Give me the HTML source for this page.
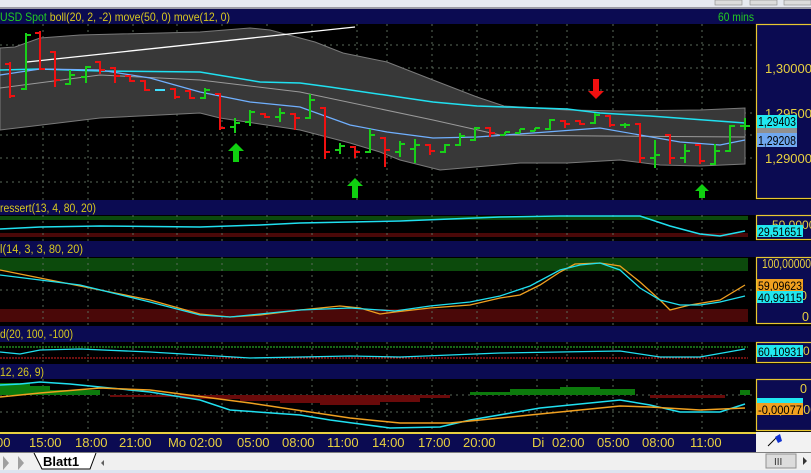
<!DOCTYPE html>
<html><head><meta charset="utf-8"><style>
html,body{margin:0;padding:0;width:811px;height:473px;overflow:hidden;background:#000;}
svg{display:block;font-family:"Liberation Sans",sans-serif;}
</style></head><body>
<svg width="811" height="473" viewBox="0 0 811 473" xmlns="http://www.w3.org/2000/svg">
<rect x="0" y="0" width="811" height="473" fill="#000"/>
<rect x="0" y="0" width="811" height="8" fill="#e6e9f0"/>
<rect x="0" y="7" width="811" height="2" fill="#9a9aa4"/>
<rect x="715" y="0" width="27" height="5" fill="#dcdcdc" stroke="#888" stroke-width="0.6"/>
<rect x="750" y="0" width="27" height="5" fill="#dcdcdc" stroke="#888" stroke-width="0.6"/>
<rect x="784" y="0" width="27" height="5" fill="#dcdcdc" stroke="#888" stroke-width="0.6"/>
<g fill="#0b0b52">
<rect x="0" y="9" width="811" height="15"/>
<rect x="0" y="200" width="811" height="15"/>
<rect x="0" y="241" width="811" height="16"/>
<rect x="0" y="326" width="811" height="16"/>
<rect x="0" y="364" width="811" height="15"/>
<rect x="0" y="432" width="811" height="20"/>
</g>
<text x="0" y="21" font-size="12" fill="#22cc22" textLength="230" lengthAdjust="spacingAndGlyphs">USD Spot <tspan fill="#d8c820">boll(20, 2, -2) move(50, 0) move(12, 0)</tspan></text>
<text x="718" y="21" font-size="12" fill="#22cc22" textLength="36" lengthAdjust="spacingAndGlyphs">60 mins</text>
<text x="0" y="212" font-size="11.5" fill="#d8c820" textLength="96" lengthAdjust="spacingAndGlyphs">ressert(13, 4, 80, 20)</text>
<text x="0" y="253" font-size="11.5" fill="#d8c820" textLength="83" lengthAdjust="spacingAndGlyphs">l(14, 3, 3, 80, 20)</text>
<text x="0" y="338" font-size="11.5" fill="#d8c820" textLength="73" lengthAdjust="spacingAndGlyphs">d(20, 100, -100)</text>
<text x="0" y="376" font-size="11.5" fill="#d8c820" textLength="44" lengthAdjust="spacingAndGlyphs">12, 26, 9)</text>

<g fill="#0b0b52" stroke="#e8c830" stroke-width="1.2">
<rect x="756.5" y="24.5" width="60" height="174"/>
<rect x="756.5" y="215.5" width="60" height="24"/>
<rect x="756.5" y="257.5" width="60" height="66"/>
<rect x="756.5" y="342.5" width="60" height="20"/>
<rect x="756.5" y="379.5" width="60" height="51"/>
</g>
<rect x="756" y="432" width="55" height="20" fill="#f2f2f2"/>
<path d="M768 446 L776 438" stroke="#000" stroke-width="1"/>
<path d="M775 437 l5 -3 l2 7 l-4 2 z" fill="#1030d0"/>

<rect x="0" y="216" width="748" height="4" fill="#0c4a0c"/>
<rect x="0" y="233" width="748" height="4" fill="#4a0808"/>
<rect x="0" y="258" width="748" height="13" fill="#0c4a0c"/>
<rect x="0" y="309" width="748" height="13" fill="#4a0808"/>
<line x1="0" y1="347" x2="748" y2="347" stroke="#30d030" stroke-dasharray="2,1"/>
<line x1="0" y1="358" x2="748" y2="358" stroke="#e02020" stroke-dasharray="2,1"/>

<g stroke="#5a6a5a" stroke-width="1" stroke-dasharray="2,4">
<path d="M43 24V200M88 24V200M133 24V200M177 24V200M222 24V200M267 24V200M312 24V200M357 24V200M387 24V200M432 24V200M477 24V200M537 24V200M567 24V200M613 24V200M657 24V200M702 24V200"/>
<path d="M43 215V241M88 215V241M133 215V241M177 215V241M222 215V241M267 215V241M312 215V241M357 215V241M387 215V241M432 215V241M477 215V241M537 215V241M567 215V241M613 215V241M657 215V241M702 215V241"/>
<path d="M43 257V326M88 257V326M133 257V326M177 257V326M222 257V326M267 257V326M312 257V326M357 257V326M387 257V326M432 257V326M477 257V326M537 257V326M567 257V326M613 257V326M657 257V326M702 257V326"/>
<path d="M43 342V364M88 342V364M133 342V364M177 342V364M222 342V364M267 342V364M312 342V364M357 342V364M387 342V364M432 342V364M477 342V364M537 342V364M567 342V364M613 342V364M657 342V364M702 342V364"/>
<path d="M43 379V432M88 379V432M133 379V432M177 379V432M222 379V432M267 379V432M312 379V432M357 379V432M387 379V432M432 379V432M477 379V432M537 379V432M567 379V432M613 379V432M657 379V432M702 379V432"/>
<path d="M0 45H756M0 68H756M0 90H756M0 113H756M0 135H756M0 158H756M0 182H756M0 290H756M0 395H756M0 412H756"/>
</g>

<path d="M0 48 L15 47 L40 38 L80 35 L200 32 L250 28 L270 30 L315 42 L343 53 L387 62 L433 80 L477 97 L504 106 L567 110 L620 111 L700 110 L745 108 L745 164 L700 166 L660 165 L620 160 L567 163 L520 163 L475 167 L440 170 L400 160 L380 152 L350 143 L300 130 L220 118 L200 113 L100 118 L0 130 Z" fill="#383838" stroke="#7a7a7a" stroke-width="1"/>
<polyline points="0,88 100,75 200,80 300,92 433,120 500,135 600,136 745,137" fill="none" stroke="#9a9a9a" stroke-width="1"/>
<polyline points="0,70 40,69 100,71 200,72 260,82 300,83 330,87 433,102 477,106 567,109 600,113 650,116 745,123" fill="none" stroke="#20e0f0" stroke-width="1.5"/>
<polyline points="0,75 40,69 100,70 150,78 200,92 250,102 300,107 350,125 387,132 433,138 477,137 533,133 600,128 640,135 680,142 720,145 745,140" fill="none" stroke="#70b0ff" stroke-width="1.2"/>
<line x1="27" y1="62" x2="355" y2="27" stroke="#ffffff" stroke-width="1.3"/>

<g stroke-width="2" fill="none">
<path stroke="#f01010" d="M10 62V98M5 64H10M10 96H15 M40 31V70M35 33H40M40 69H45 M55 51V87M50 52H55M55 80H60 M100 61V74M95 62H100M100 70H105 M115 67V83M110 68H115M115 76H120 M130 75V82M125 76H130M130 81H135 M145 80V91M140 81H145M145 90H150 M175 88V99M170 89H175M175 97H180 M190 90V99M185 91H190M190 98H195 M220 93V130M215 94H220M220 128H225 M265 113V118M260 114H265M265 117H270 M295 113V130M290 114H295M295 118H300 M325 107V159M320 108H325M325 152H330 M355 146V158M350 147H355M355 152H360 M385 137V167M380 138H385M385 150H390 M430 144V155M425 145H430M430 151H435 M490 127V137M485 128H490M490 133H495 M565 120V128M560 121H565M565 124H570 M580 120V125M575 121H580M580 124H585 M610 115V127M605 116H610M610 125H615 M640 123V163M635 124H640M640 158H645 M670 134V164M665 135H670M670 158H675 M700 144V164M695 145H700M700 161H705"/>
<path stroke="#18d018" d="M26 33V90M21 89H26M26 35H31 M70 70V85M65 84H70M70 75H75 M86 66V83M81 77H86M86 67H91 M205 88V99M200 98H205M205 90H210 M235 118V133M230 127H235M235 123H240 M250 110V126M245 122H250M250 112H255 M280 108V122M275 117H280M280 113H285 M310 94V119M305 118H310M310 100H315 M340 143V154M335 150H340M340 146H345 M370 129V153M365 152H370M370 135H375 M400 141V157M395 152H400M400 144H405 M415 139V163M410 149H415M415 145H420 M445 144V153M440 152H445M445 145H450 M460 133V146M455 145H460M460 136H465 M475 127V141M470 140H475M475 128H480 M505 132V135M500 135H505M505 132H510 M520 129V133M515 133H520M520 129H525 M535 128V131M530 131H535M535 128H540 M550 119V130M545 129H550M550 120H555 M595 113V124M590 123H595M595 115H600 M625 123V128M620 125H625M625 125H630 M655 140V168M650 158H655M655 155H660 M685 144V163M680 158H685M685 151H690 M715 144V165M710 164H715M715 151H720 M730 125V152M725 151H730M730 126H735 M745 118V130M740 126H745M745 126H750"/>
<path stroke="#40e0ff" d="M155 90H165"/>
</g>

<path d="M236 143 l-8 8 h5 v11 h6 v-11 h5 z" fill="#10d010"/>
<path d="M355 178 l-8 8 h5 v12 h6 v-12 h5 z" fill="#10d010"/>
<path d="M702 184 l-7 7 h4 v7 h6 v-7 h4 z" fill="#10d010"/>
<path d="M596 99 l-8 -8 h5 v-12 h6 v12 h5 z" fill="#f01010"/>

<g fill="#e8d040" font-size="13">
<text x="765" y="73">1,30000</text>
<text x="765" y="118">1,29500</text>
<text x="765" y="163">1,29000</text>
</g>
<rect x="757" y="115" width="40" height="13" fill="#20e8f0"/>
<text x="758" y="126" font-size="12.5" fill="#000" textLength="38" lengthAdjust="spacingAndGlyphs">1,29403</text>
<rect x="757" y="128" width="40" height="5" fill="#909090"/>
<rect x="757" y="133" width="40" height="14" fill="#70a8f0"/>
<text x="758" y="145" font-size="12.5" fill="#000" textLength="38" lengthAdjust="spacingAndGlyphs">1,29208</text>

<polyline points="0,229 40,227 100,226 200,227 260,225 300,223 350,222 400,221 450,219 500,217 560,216 640,216 670,226 700,234 720,236 745,231" fill="none" stroke="#20e0f0" stroke-width="1.5"/>
<text x="772" y="229" font-size="12" fill="#e8d040">50,00000</text>
<rect x="757" y="225" width="46" height="12" fill="#20e8f0"/>
<text x="758" y="236" font-size="12" fill="#000" textLength="44" lengthAdjust="spacingAndGlyphs">29,51651</text>

<polyline points="0,270 30,276 60,282 100,290 150,300 200,314 230,317 260,315 300,310 340,306 360,308 380,314 395,312 430,308 470,305 500,298 520,295 540,285 560,272 575,264 600,263 620,266 640,282 660,300 670,310 690,305 720,300 745,285" fill="none" stroke="#f0a020" stroke-width="1.3"/>
<polyline points="0,275 40,280 80,285 150,302 200,315 230,317 300,310 350,308 395,311 430,306 470,302 500,296 530,286 560,270 580,265 600,263 620,270 640,288 660,300 680,305 700,305 720,302 745,296" fill="none" stroke="#20e0f0" stroke-width="1.3"/>
<g fill="#e8d040" font-size="12.5"><text x="762" y="268" textLength="49" lengthAdjust="spacingAndGlyphs">100,00000</text><text x="800" y="300">0</text><text x="802" y="321">0</text></g>
<rect x="757" y="279" width="46" height="12" fill="#f0a020"/>
<text x="758" y="290" font-size="12" fill="#000" textLength="44" lengthAdjust="spacingAndGlyphs">59,09623</text>
<rect x="757" y="291" width="46" height="12" fill="#20e8f0"/>
<text x="758" y="302" font-size="12" fill="#000" textLength="44" lengthAdjust="spacingAndGlyphs">40,99115</text>

<polyline points="0,352 20,354 40,350 80,349 150,352 200,355 250,358 300,357 350,356 400,357 450,355 500,353 560,352 620,351 660,357 700,357 745,349" fill="none" stroke="#20e0f0" stroke-width="1.3"/>
<rect x="757" y="345" width="46" height="12" fill="#20e8f0"/>
<text x="758" y="356" font-size="12" fill="#000" textLength="44" lengthAdjust="spacingAndGlyphs">60,10931</text>
<text x="803" y="355" font-size="12" fill="#e8d040">0</text>

<path d="M0 383 H30 V386 H50 V390 H100 V395 H0 Z" fill="#0c7a0c"/>
<path d="M110 395 H450 V398 H420 V402 H380 V405 H320 V403 H280 V401 H240 V399 H180 V397 H110 Z" fill="#6a0a0a"/>
<path d="M470 395 V392 H510 V389 H560 V387 H600 V389 H635 V395 Z" fill="#0c7a0c"/>
<path d="M650 395 H725 V398 H650 Z" fill="#6a0a0a"/>
<path d="M740 395 V390 H750 V395 Z" fill="#0c7a0c"/>
<polyline points="0,385 20,384 40,382 70,384 110,388 150,392 200,400 230,410 300,415 330,420 360,424 390,428 440,427 470,420 540,408 620,400 650,405 680,412 720,412 745,404" fill="none" stroke="#20e0f0" stroke-width="1.5"/>
<polyline points="0,397 40,393 100,388 150,390 250,403 350,418 400,423 450,423 530,415 620,406 650,407 700,410 745,408" fill="none" stroke="#f0a020" stroke-width="1.5"/>
<g fill="#e8d040" font-size="12.5"><text x="800" y="393">0</text><text x="772" y="414">0,00100</text></g>
<rect x="757" y="398" width="46" height="5" fill="#20e8f0"/>
<rect x="757" y="403" width="46" height="12" fill="#f0a020"/>
<text x="758" y="414" font-size="12" fill="#000" textLength="44" lengthAdjust="spacingAndGlyphs">-0,00077</text>

<rect x="0" y="432" width="756" height="2" fill="#e8d040"/>
<g fill="#e8d040" font-size="13">
<text x="-4" y="447">00</text><text x="29" y="447">15:00</text><text x="75" y="447">18:00</text><text x="119" y="447">21:00</text>
<text x="168" y="447">Mo 02:00</text><text x="237" y="447">05:00</text><text x="282" y="447">08:00</text><text x="327" y="447">11:00</text>
<text x="372" y="447">14:00</text><text x="418" y="447">17:00</text><text x="463" y="447">20:00</text>
<text x="532" y="447">Di</text><text x="552" y="447">02:00</text><text x="597" y="447">05:00</text><text x="642" y="447">08:00</text><text x="690" y="447">11:00</text>
</g>

<rect x="0" y="452" width="811" height="21" fill="#f0f0f0"/>
<rect x="0" y="452" width="811" height="1" fill="#808080"/>
<path d="M3 456 l6 7 l-6 7z M18 456 l6 7 l-6 7z" fill="#a0a0a0"/>
<path d="M34 453 L42 469 H90 L96 453" fill="#fff" stroke="#000" stroke-width="1"/>
<text x="43" y="466" font-size="13" font-weight="bold" fill="#000">Blatt1</text>
<path d="M104 460 l-3 3 l3 3z" fill="#606060"/>
<rect x="766" y="454" width="30" height="14" fill="#dcdcdc" stroke="#909090"/>
<text x="774" y="465" font-size="10" fill="#333">III</text>
<path d="M803 457 l4 4 l-4 4z" fill="#333"/>
<rect x="0" y="470" width="811" height="3" fill="#dde4f0"/>
</svg>
</body></html>
